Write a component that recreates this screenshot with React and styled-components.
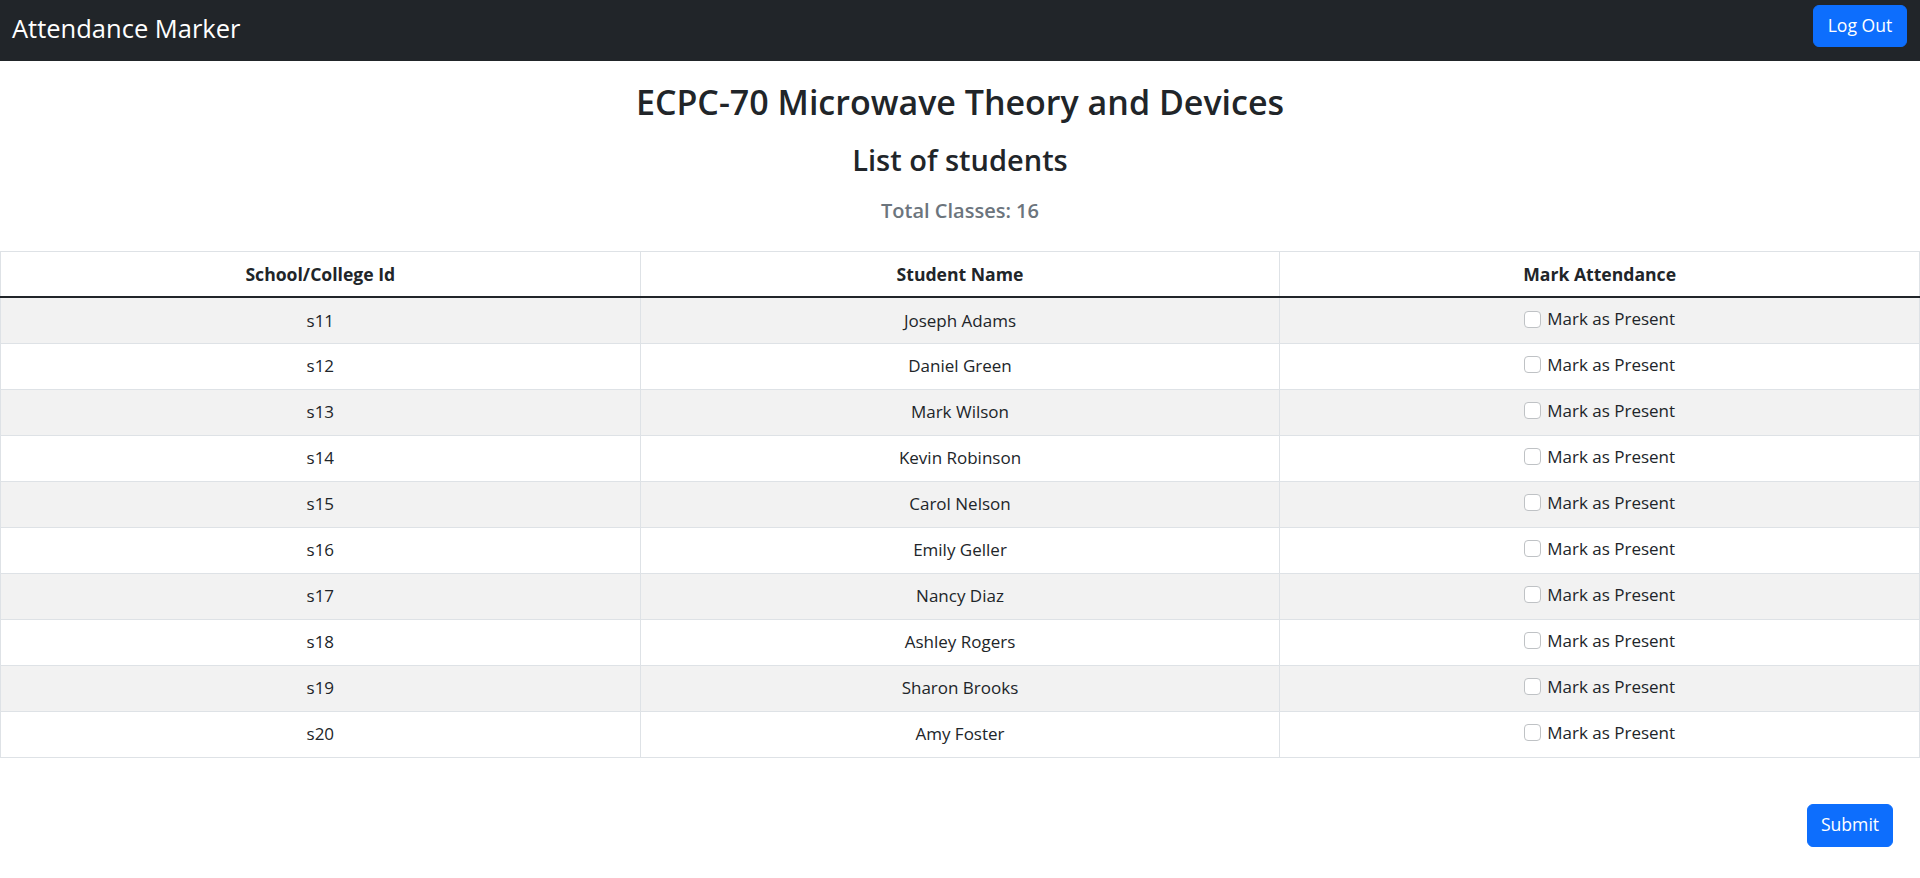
import React from "react";
import styled, { createGlobalStyle } from "styled-components";

const GlobalStyle = createGlobalStyle`
  *, *::before, *::after { box-sizing: border-box; }
  html, body { margin: 0; padding: 0; }
  body {
    font-family: "Open Sans", "Noto Sans", "Liberation Sans", sans-serif;
    color: #212529;
    background: #fff;
    font-size: 17px;
    line-height: 1.5;
  }
`;

const Navbar = styled.nav`
  height: 61px;
  background: #212529;
  display: flex;
  align-items: flex-start;
  justify-content: space-between;
  padding: 5px 13px 0 12px;
`;

const Brand = styled.span`
  color: #fff;
  font-size: 25.5px;
  line-height: 42px;
  padding-top: 2px;
  white-space: nowrap;
`;

const Button = styled.button`
  font-family: inherit;
  font-size: 17.6px;
  line-height: 1;
  color: #fff;
  background: #0d6efd;
  border: 1px solid #0d6efd;
  border-radius: 6px;
  height: ${(p) => p.$h}px;
  width: ${(p) => p.$w}px;
  padding: 0;
  cursor: pointer;
`;

const Header = styled.header`
  display: flex;
  flex-direction: column;
  align-items: center;
  padding-top: 20px;
`;

const Title = styled.h2`
  margin: 0;
  font-size: 34px;
  font-weight: 600;
  line-height: 42px;
`;

const Subtitle = styled.h3`
  margin: 19px 0 0;
  font-size: 29px;
  font-weight: 600;
  line-height: 36px;
`;

const Muted = styled.h5`
  margin: 19.5px 0 0;
  font-size: 20px;
  font-weight: 600;
  line-height: 26px;
  color: #6c757d;
`;

const Table = styled.table`
  margin-top: 27px;
  width: 100%;
  border-collapse: collapse;
  table-layout: fixed;
  border: 1px solid #dee2e6;
`;

const Th = styled.th`
  height: 46px;
  padding: 0 9px;
  font-size: 17.6px;
  font-weight: 700;
  text-align: center;
  border: 1px solid #dee2e6;
  border-bottom: 2px solid #212529;
`;

const Row = styled.tr`
  background: ${(p) => (p.$striped ? "#f2f2f2" : "#fff")};
`;

const Td = styled.td`
  height: 46px;
  padding: 0 9px;
  text-align: center;
  border: 1px solid #dee2e6;
`;

const CheckLabel = styled.label`
  display: inline-flex;
  align-items: center;
  gap: 6px;
`;

const Check = styled.input`
  appearance: none;
  width: 17px;
  height: 17px;
  margin: 0;
  border: 1px solid #bfc2c5;
  border-radius: 4px;
  background: #fff;
`;

const Footer = styled.div`
  display: flex;
  justify-content: flex-end;
  padding: 46px 27px 0 0;
`;

const students = [
  ["s11", "Joseph Adams"],
  ["s12", "Daniel Green"],
  ["s13", "Mark Wilson"],
  ["s14", "Kevin Robinson"],
  ["s15", "Carol Nelson"],
  ["s16", "Emily Geller"],
  ["s17", "Nancy Diaz"],
  ["s18", "Ashley Rogers"],
  ["s19", "Sharon Brooks"],
  ["s20", "Amy Foster"],
];

export default function App() {
  return (
    <>
      <GlobalStyle />
      <Navbar>
        <Brand>Attendance Marker</Brand>
        <Button $w={94} $h={42}>Log Out</Button>
      </Navbar>
      <Header>
        <Title>ECPC-70 Microwave Theory and Devices</Title>
        <Subtitle>List of students</Subtitle>
        <Muted>Total Classes: 16</Muted>
      </Header>
      <Table>
        <thead>
          <tr>
            <Th>School/College Id</Th>
            <Th>Student Name</Th>
            <Th>Mark Attendance</Th>
          </tr>
        </thead>
        <tbody>
          {students.map(([id, name], i) => (
            <Row key={id} $striped={i % 2 === 0}>
              <Td>{id}</Td>
              <Td>{name}</Td>
              <Td>
                <CheckLabel>
                  <Check type="checkbox" />
                  Mark as Present
                </CheckLabel>
              </Td>
            </Row>
          ))}
        </tbody>
      </Table>
      <Footer>
        <Button $w={86} $h={43}>Submit</Button>
      </Footer>
    </>
  );
}
